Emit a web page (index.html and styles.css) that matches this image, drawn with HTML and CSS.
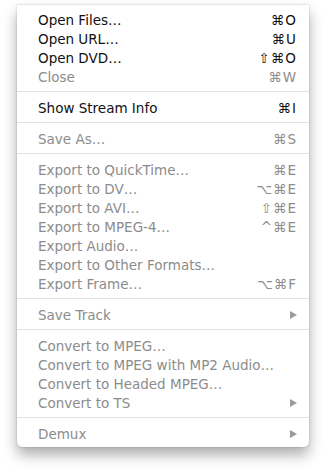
FILE: index.html
```html
<!DOCTYPE html>
<html lang="en">
<head>
    <meta charset="UTF-8">
    <title>File Menu</title>
    <link rel="stylesheet" href="styles.css">
</head>
<body>
    <!-- File menu -->
    <div class="menu">
        <div class="item"><span>Open Files…</span><span class="key">⌘O</span></div>
        <div class="item"><span>Open URL…</span><span class="key">⌘U</span></div>
        <div class="item"><span>Open DVD…</span><span class="key">⇧⌘O</span></div>
        <div class="item off"><span>Close</span><span class="key">⌘W</span></div>
        <div class="sep"></div>
        <div class="item"><span>Show Stream Info</span><span class="key">⌘I</span></div>
        <div class="sep"></div>
        <div class="item off"><span>Save As…</span><span class="key">⌘S</span></div>
        <div class="sep"></div>
        <div class="item off"><span>Export to QuickTime…</span><span class="key">⌘E</span></div>
        <div class="item off"><span>Export to DV…</span><span class="key">⌥⌘E</span></div>
        <div class="item off"><span>Export to AVI…</span><span class="key">⇧⌘E</span></div>
        <div class="item off"><span>Export to MPEG-4…</span><span class="key">^⌘E</span></div>
        <div class="item off"><span>Export Audio…</span></div>
        <div class="item off"><span>Export to Other Formats…</span></div>
        <div class="item off"><span>Export Frame…</span><span class="key">⌥⌘F</span></div>
        <div class="sep"></div>
        <div class="item off"><span>Save Track</span><span class="arrow"></span></div>
        <div class="sep"></div>
        <div class="item off"><span>Convert to MPEG…</span></div>
        <div class="item off"><span>Convert to MPEG with MP2 Audio…</span></div>
        <div class="item off"><span>Convert to Headed MPEG…</span></div>
        <div class="item off"><span>Convert to TS</span><span class="arrow"></span></div>
        <div class="sep"></div>
        <div class="item off"><span>Demux</span><span class="arrow"></span></div>
    </div>
</body>
</html>
```

FILE: styles.css
```css
body {
    margin: 0;
    background-color: #ffffff;
    font-family: 'DejaVu Sans', sans-serif;
    font-size: 13.5px;
    width: 326px;
    height: 475px;
    overflow: hidden;
}

.menu {
    margin: 5px 0 0 17px;
    width: 292px;
    padding: 5px 0 4px;
    background-color: #ffffff;
    border-radius: 0 0 5px 5px;
    box-shadow: 0 8px 14px rgba(0, 0, 0, 0.32), 0 0 2px rgba(0, 0, 0, 0.25);
}

.item {
    display: flex;
    justify-content: space-between;
    align-items: center;
    height: 19px;
    padding: 0 12px 0 21px;
    color: #111;
}

.item.off {
    color: #8c8c8c;
}

.key {
    letter-spacing: 1px;
}

.arrow {
    width: 0;
    height: 0;
    border-top: 4.5px solid transparent;
    border-bottom: 4.5px solid transparent;
    border-left: 7px solid #9a9a9a;
}

.sep {
    height: 1px;
    background-color: #e2e2e2;
    margin: 5px 0 6px;
}
```
